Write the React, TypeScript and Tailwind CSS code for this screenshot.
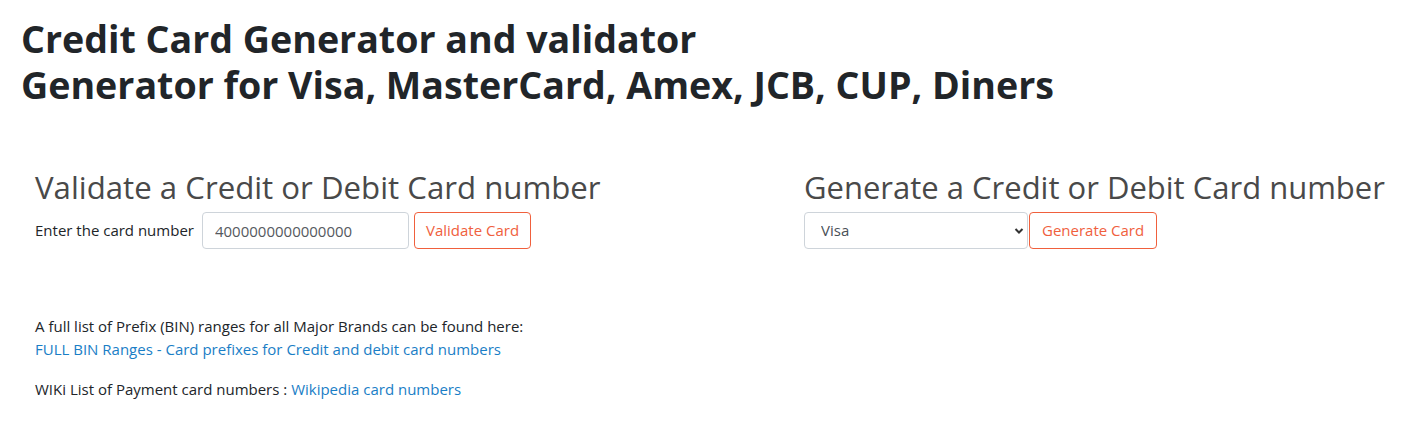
export default function App() {
  return (
    <div className="min-h-[430px] bg-white px-[21px] pt-[16px] font-['Open_Sans',sans-serif] text-[#212529]">
      <h1 className="text-[37.6px] font-bold leading-[46px]">
        Credit Card Generator and validator
        <br />
        Generator for Visa, MasterCard, Amex, JCB, CUP, Diners
      </h1>

      <div className="mt-[60px] flex">
        {/* Validate */}
        <div className="w-[783px] pl-[14px]">
          <h2 className="text-[31.2px] font-medium leading-[38px] text-[#494949]">
            Validate a Credit or Debit Card number
          </h2>
          <div className="mt-[6px] flex items-center">
            <label className="mr-[8px] text-[15px]">Enter the card number</label>
            <input
              className="h-[37px] w-[207px] rounded-[4px] border border-[#ced4da] px-[12px] text-[15px] text-[#55595e] outline-none"
              defaultValue="4000000000000000"
            />
            <button className="ml-[5px] h-[37px] rounded-[4px] border border-[#f0603d] px-[11px] text-[15px] text-[#f0603d]">
              Validate Card
            </button>
          </div>
        </div>

        {/* Generate */}
        <div>
          <h2 className="text-[31px] font-medium leading-[38px] text-[#494949]">
            Generate a Credit or Debit Card number
          </h2>
          <div className="mt-[6px] flex items-center">
            <div className="relative">
              <select
                className="h-[37px] w-[224px] appearance-none rounded-[4px] border border-[#ced4da] bg-white pl-[16px] text-[15px] text-[#495057] outline-none"
                defaultValue="visa"
              >
                <option value="visa">Visa</option>
                <option value="mastercard">MasterCard</option>
                <option value="amex">Amex</option>
                <option value="jcb">JCB</option>
                <option value="cup">CUP</option>
                <option value="diners">Diners</option>
              </select>
              <svg
                className="pointer-events-none absolute right-[4px] top-[15px] h-[8px] w-[10px]"
                viewBox="0 0 10 8"
                fill="none"
                stroke="#333"
                strokeWidth="2"
              >
                <path d="M1.5 2l3.5 3.5L8.5 2" />
              </svg>
            </div>
            <button className="ml-[1px] h-[37px] rounded-[4px] border border-[#f0603d] px-[12px] text-[15px] text-[#f0603d]">
              Generate Card
            </button>
          </div>
        </div>
      </div>

      <div className="mt-[66px] pl-[14px] text-[15px] leading-[23px]">
        <p>
          A full list of Prefix (BIN) ranges for all Major Brands can be found here:
          <br />
          <a href="#" className="text-[#1a7ec6]">
            FULL BIN Ranges - Card prefixes for Credit and debit card numbers
          </a>
        </p>
        <p className="mt-[17px]">
          WIKi List of Payment card numbers :{' '}
          <a href="#" className="text-[#1a7ec6]">
            Wikipedia card numbers
          </a>
        </p>
      </div>
    </div>
  )
}
